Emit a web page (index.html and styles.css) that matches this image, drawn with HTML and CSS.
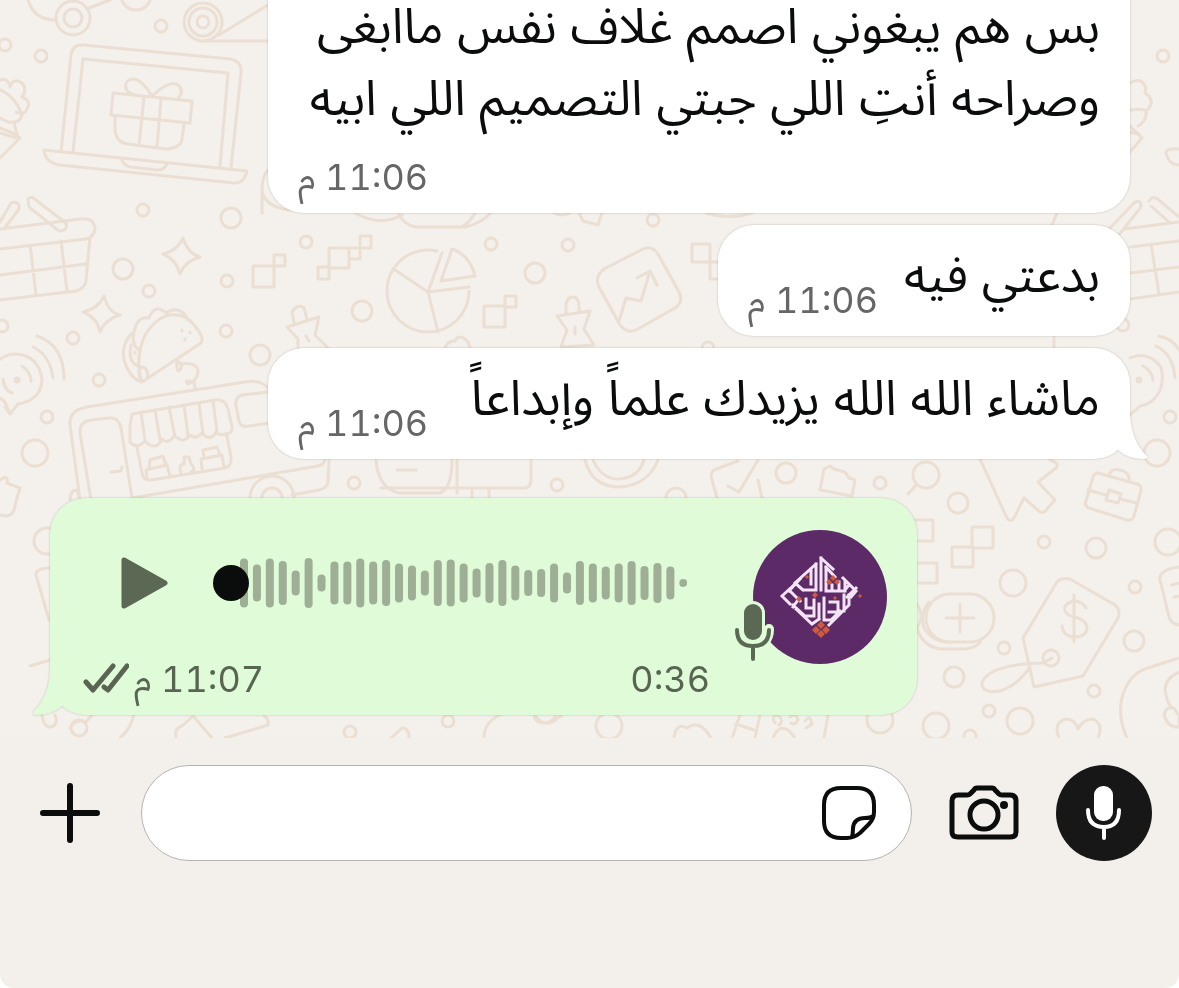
FILE: index.html
```
<!DOCTYPE html>
<html lang="ar" dir="rtl">
<head>
  <meta charset="UTF-8">
  <meta name="viewport" content="width=device-width, initial-scale=1">
  <title>محادثة</title>
  <link rel="stylesheet" href="styles.css">
</head>
<body>
  <div class="app">

    <main class="chat">
      <svg class="wallpaper" viewBox="0 0 1179 738" preserveAspectRatio="xMidYMax slice" aria-hidden="true">
        <!-- scattered dots -->
        <g>
          <circle cx="161" cy="26" r="6"/><circle cx="5" cy="45" r="6"/><circle cx="41" cy="56" r="6"/>
          <circle cx="143" cy="210" r="6"/><circle cx="231" cy="218" r="10"/><circle cx="306" cy="242" r="6"/>
          <circle cx="123" cy="269" r="10"/><circle cx="149" cy="291" r="6"/><circle cx="227" cy="281" r="6"/>
          <circle cx="226" cy="331" r="6"/><circle cx="260" cy="355" r="10"/><circle cx="362" cy="311" r="10"/>
          <circle cx="73" cy="338" r="6"/><circle cx="99" cy="380" r="6"/><circle cx="2" cy="326" r="6"/>
          <circle cx="47" cy="417" r="6"/><circle cx="35" cy="453" r="13"/><circle cx="354" cy="483" r="6"/>
          <circle cx="491" cy="244" r="6"/><circle cx="568" cy="245" r="6"/><circle cx="653" cy="220" r="6"/>
          <circle cx="535" cy="273" r="10"/><circle cx="708" cy="348" r="6"/><circle cx="557" cy="485" r="6"/>
          <circle cx="676" cy="498" r="10"/><circle cx="786" cy="473" r="10"/><circle cx="880" cy="483" r="6"/>
          <circle cx="958" cy="503" r="10"/><circle cx="1044" cy="542" r="6"/><circle cx="1096" cy="548" r="10"/>
          <circle cx="1168" cy="542" r="13"/><circle cx="1013" cy="583" r="13"/><circle cx="1135" cy="587" r="6"/>
          <circle cx="1134" cy="641" r="10"/><circle cx="1004" cy="648" r="6"/><circle cx="954" cy="677" r="10"/>
          <circle cx="989" cy="711" r="6"/><circle cx="936" cy="726" r="13"/><circle cx="1020" cy="721" r="13"/>
          <circle cx="1094" cy="691" r="6"/><circle cx="970" cy="736" r="6"/><circle cx="1123" cy="325" r="6"/>
          <circle cx="1170" cy="417" r="6"/><circle cx="1157" cy="453" r="13"/><circle cx="1163" cy="56" r="6"/>
          <circle cx="47" cy="541" r="13"/><circle cx="79" cy="728" r="8"/><circle cx="350" cy="732" r="6"/>
          <circle cx="448" cy="721" r="6"/><circle cx="609" cy="726" r="13"/><circle cx="880" cy="720" r="13"/>
        </g>
        <!-- toy wheels -->
        <path d="M28 0Q34 20 56 20M89 8L110 0M219 35L268 5M203 41H268"/>
        <circle cx="73" cy="18" r="17"/><circle cx="73" cy="18" r="9"/>
        <circle cx="136" cy="-5" r="15"/>
        <circle cx="203" cy="22" r="19"/><circle cx="203" cy="22" r="14"/><circle cx="203" cy="22" r="6"/>
        <!-- laptop with gift -->
        <path d="M61 152L71 55Q72 44 84 45L230 59Q242 61 241 73L231 168M73 152L83 59L228 73L220 166M44 150L247 171Q244 184 234 183L60 165Q45 163 44 150ZM122 160Q124 166 131 167L157 170Q164 170 167 164"/>
        <path d="M113 93L192 101L190 123L111 115ZM115 116L115 131Q117 143 128 144L166 149Q181 148 182 139L184 123M144 97L139 145M161 99L157 147M152 96Q141 78 132 79Q124 81 126 88Q127 94 137 95M152 96Q169 81 176 84Q184 88 180 96L178 99"/>
        <!-- flowers at both sides -->
        <path d="M0 80Q8 77 10 87Q14 76 23 84Q27 91 22 97Q32 101 27 109Q24 116 16 112M0 90Q15 96 22 115Q20 124 8 122L0 118M0 128L17 135L20 138L0 158M17 135L14 122M0 133L16 138"/>
        <path d="M1130 83Q1141 76 1146 88L1145 93Q1157 101 1146 111Q1147 121 1138 126M1130 110Q1144 108 1146 111M1130 126L1142 138L1130 152M1130 132L1139 134M1179 149Q1166 148 1166 153Q1169 165 1179 165"/>
        <!-- baskets -->
        <path d="M0 229L80 219Q94 217 95 229Q94 237 86 239L0 249M90 237L86 281Q85 288 76 291L0 300M0 275L86 264M30 245L36 294M61 241L67 291M0 222L11 203Q20 200 19 209L4 229M28 199Q32 195 37 201L66 223Q68 231 59 231L29 207Z"/>
        <path d="M1110 228L1134 203Q1141 198 1141 207L1118 236M1149 201Q1153 194 1160 201L1179 217M1151 206L1170 223M1124 229L1179 222M1130 247L1179 241M1130 273L1179 267M1130 299L1179 292M1151 244L1159 294"/>
        <!-- sparkles -->
        <path d="M183 238Q188 254 200 257Q185 261 180 274Q176 259 163 254Q177 251 183 238ZM104 296Q108 312 120 315Q105 319 100 332Q97 317 83 312Q98 309 104 296Z"/>
        <!-- pixel stairs -->
        <path d="M253 266h21v21h-21zM274 255h11v11h-11zM318 267h11v12h-11zM329 248h20v20h-20zM349 248h11v11h-11zM360 236h11v12h-11zM484 306h21v21h-21zM505 296h11v11h-11zM692 244h18v18h-18zM710 262h18v17h-18zM900 520h33v21h-33zM972 527h21v21h-21zM952 547h21v20h-21zM916 563h21v20h-21z"/>
        <!-- taco -->
        <path d="M142 382Q134 360 145 335Q162 308 185 317Q190 319 198 330Q204 338 201 343L142 382Q130 379 124 360Q121 342 134 332Q137 316 149 318Q155 303 166 313Q180 304 188 320M134 332Q131 345 139 350M131 345Q127 365 142 367M142 382Q136 372 142 367Q149 368 147 378"/>
        <path d="M182 330v1M190 332v1M185 339v1M135 352v1M139 358v1"/>
        <!-- audio bubble -->
        <path d="M5 407L10 414L18 404Q41 400 42 380Q39 355 15 354Q0 355 -5 366M10 414L5 402L0 398M37 336Q64 345 64 379M33 347Q50 355 53 378M3 379Q4 390 12 393M22 366Q31 372 31 381"/>
        <circle cx="17" cy="380" r="2"/>
        <!-- food truck -->
        <path d="M80 500L70 425Q69 410 87 407L245 382Q262 379 270 390M91 500L80 433Q79 422 91 420L109 418Q119 417 121 428L132 498L318 466Q327 464 324 455M329 460L328 481Q328 488 319 490L292 495M111 472L121 471L122 467M268 392L242 395Q235 397 236 405L239 421Q241 428 249 426L270 423"/>
        <path d="M132 414L215 400Q225 398 228 409L232 427Q233 433 226 434Q219 436 216 432Q212 440 205 436L202 433Q196 440 190 435Q184 443 178 438L174 436Q168 445 162 439Q157 450 148 444L145 441Q137 450 130 442L130 426ZM141 412L145 441M155 410L160 440M169 407L175 437M184 405L188 436M199 403L203 434M213 401L217 432M137 448L142 473Q143 481 151 480L225 468Q232 466 231 457L227 436"/>
        <path d="M147 479L146 470L167 465L170 476M149 469L150 460L163 456L166 465M181 473Q178 464 184 464V457H189L191 464Q197 470 191 472M202 469L201 459L222 455L224 467M204 458L203 450L217 447L220 455"/>
        <circle cx="272" cy="498" r="22"/><circle cx="272" cy="498" r="10"/>
        <path d="M195 388L194 382Q183 379 188 384Q198 381 198 370Q195 362 182 364L177 361Q176 371 179 371Q184 366 179 362"/>
        <!-- pie chart -->
        <circle cx="428" cy="291" r="41" stroke-dasharray="202 56" stroke-dashoffset="0"/>
        <path d="M442 253L428 292L395 270M428 292L469 287M428 292L438 332M452 249L441 281L475 276Q470 255 452 249Z"/>
        <!-- bulldog clips -->
        <path d="M557 316L590 311L584 329L594 345M557 316L567 330L561 347L594 345M566 314V304Q568 296 574 297Q580 298 579 312M575 327V334M287 327L319 317L315 335L328 348M287 327L298 339V348M294 323L292 312Q298 303 304 308L307 319M306 336L309 341"/>
        <!-- trend tile -->
        <path d="M604 269L643 249Q652 245 658 254L679 292Q684 302 675 308L636 330Q627 334 620 325L599 287Q594 277 604 269ZM619 321L626 298L641 301L650 271M637 278L650 271L657 285"/>
        <path d="M398 213Q403 224 415 227H465Q480 224 491 213M475 213Q470 222 463 226M355 213Q380 227 402 215M579 213L583 221L598 225L602 213M554 213Q562 217 570 213M706 213Q730 220 752 213M262 213V190Q262 176 268 170M262 190Q264 207 290 210M445 348Q448 340 455 341L458 337Q468 337 470 348M1057 213L1052 225M1054 337V348"/>
        <!-- screens, coins and ticks -->
        <path d="M376 460Q378 487 398 493H440Q452 488 452 460M397 470H416M381 488H525Q531 487 531 480V460M457 460V493M472 489V498M489 489V498M585 460Q592 487 620 487Q648 485 658 460M593 460Q602 480 620 479Q639 477 644 460M717 498L711 476Q711 470 719 468L738 461M728 486L739 492L758 460M758 480L762 498M824 469L830 466L834 469L845 472L849 478L855 480L852 496L820 490Z"/>
        <circle cx="926" cy="475" r="13"/>
        <path d="M917 484L908 494M980 459L1006 516Q1010 524 1014 518L1024 498L1040 512Q1044 514 1047 509L1055 500L1038 482L1056 468Q1060 463 1050 460"/>
        <!-- briefcase -->
        <path d="M1098 473L1137 484Q1142 485 1141 491L1134 516Q1132 521 1127 520L1089 508Q1084 506 1086 501L1093 477Q1094 473 1098 473ZM1088 490L1106 495M1120 499L1137 503M1109 490L1121 494L1118 503L1106 500ZM1109 475Q1111 468 1120 470Q1130 472 1129 481"/>
        <!-- voice bubble, right side -->
        <path d="M1130 358Q1148 350 1161 367Q1166 388 1153 400Q1147 405 1140 406L1130 415M1143 366Q1152 371 1153 380M1156 346Q1173 354 1175 378M1159 336Q1173 339 1179 350"/>
        <circle cx="1139" cy="380" r="2"/>
        <!-- plus pill and price tag -->
        <rect x="926" y="594" width="68" height="48" rx="24"/>
        <path d="M946 618H974M960 604V632M929 602Q920 612 924 628Q933 642 948 642M917 604Q925 616 917 628Q922 646 940 649H965Q976 648 980 642M1057 582Q1061 577 1070 579L1115 605Q1121 610 1118 618L1083 676L1034 687L1023 638ZM1086 608Q1081 600 1073 601Q1063 604 1065 611Q1067 616 1075 617Q1086 620 1087 627Q1087 637 1074 637Q1063 636 1062 626M1074 595V642M1052 658L1043 663Q991 664 982 682Q981 694 1000 691Q1018 685 1030 667"/>
        <circle cx="1051" cy="658" r="8"/>
        <!-- headset -->
        <path d="M1127 738Q1115 711 1125 689Q1133 671 1151 667L1179 658M1179 672Q1162 680 1166 695Q1168 704 1172 708M1164 715Q1166 706 1174 708L1179 716V727Q1168 728 1164 715M1179 567Q1158 570 1160 580L1169 617Q1171 624 1179 625M1172 585L1179 583M1174 597L1179 596"/>
        <path d="M1059 738Q1053 722 1066 719Q1075 719 1078 729Q1083 719 1093 719Q1104 724 1098 738"/>
        <!-- shapes that show below the voice note -->
        <path d="M0 480Q9 474 7 483L20 488L15 505Q14 519 0 515M50 568Q36 568 36 575L49 620M50 660L30 666M70 500Q70 490 77 490L80 500M42 715Q44 728 51 727Q59 725 55 715M70 728Q76 718 86 722L92 715M134 715Q130 730 120 738M176 738Q174 728 182 726L193 716L212 738M225 738L268 725Q269 719 264 716M391 738L402 728Q409 728 409 738M484 738Q484 722 500 715M535 715Q545 730 558 718L562 715M534 715Q534 723 547 723Q554 720 556 715M674 738Q676 722 687 728Q699 718 711 738M740 715L732 738M736 724L754 730M760 715L755 738M828 715L824 738M773 738Q779 723 789 731Q796 738 794 738M775 723Q770 714 779 716Q784 721 779 725M790 717Q796 712 798 720Q795 726 791 723M805 721Q810 714 812 724L806 728"/>
      </svg>

      <article class="bubble bubble-wide bubble-long">
        <p class="text">بس هم يبغوني اصمم غلاف نفس ماابغى<br>وصراحه أنتِ اللي جبتي التصميم اللي ابيه</p>
        <time class="time" datetime="23:06">11:06 م</time>
      </article>

      <article class="bubble bubble-row">
        <p class="text">بدعتي فيه</p>
        <time class="time" datetime="23:06">11:06 م</time>
      </article>

      <article class="bubble bubble-row bubble-wide">
        <p class="text">ماشاء الله الله يزيدك علماً وإبداعاً</p>
        <time class="time" datetime="23:06">11:06 م</time>
        <svg class="tail" viewBox="0 0 40 60" aria-hidden="true"><path d="M6 0H21V15Q22 42 38 57Q39 60 35 60Q19 60 9 51Z"/></svg>
      </article>

      <article class="bubble voice">
        <div class="voice-main">
          <div class="player">
            <button class="play" type="button" aria-label="تشغيل">
              <svg viewBox="0 0 48 52"><path d="M3 3V49L44 26Z"/></svg>
            </button>
            <div class="wave">
              <svg class="bars" viewBox="0 0 474 52" aria-hidden="true"></svg>
              <input class="seek" type="range" min="0" max="36" value="0" aria-label="موضع التشغيل">
            </div>
          </div>
          <div class="voice-meta">
            <span class="sent">
              <svg class="ticks" viewBox="0 0 46 32" aria-hidden="true"><path d="M3 19L10 27L30 3M21 24L25 27L44 3"/></svg>
              <time class="time" dir="rtl" datetime="23:07">11:07 م</time>
            </span>
            <span class="time">0:36</span>
          </div>
        </div>
        <div class="avatar">
          <svg class="logo" viewBox="0 0 135 135" aria-hidden="true">
            <circle class="logo-bg" cx="67" cy="67" r="67"/>
            <g class="logo-lines">
              <path d="M68 28V60M68 28L80 39M63 34V60H51M58 39V54M63 34L42 53L50 60M36 61L47 49M29 66L42 54M29 66L37 74M37 61L47 71"/>
              <path d="M73 37V61H92V52M79 55V61M86 52V61M73 37L82 47M90 48L103 61L98 67M96 55L91 61M94 67L103 58"/>
              <path d="M40 75L52 86H61V70M45 70L40 77M53 69V78H61M66 74V89M66 89L59 94L43 79M71 68V90H78L87 81M77 72H85V82H76M91 65V81M96 65V75L76 95"/>
            </g>
            <g class="logo-dots">
              <path d="M80 45l3 3l-3 3l-3-3zM76 49l3 3l-3 3l-3-3zM84 49l3 3l-3 3l-3-3zM46 66l3 3l-3 3l-3-3zM62 62l3 3l-3 3l-3-3zM107 64l2 2l-2 2l-2-2zM54 45l2 2l-2 2l-2-2zM82 66l2 2l-2 2l-2-2z"/>
              <path d="M68 91l4 4l-4 4l-4-4zM63 96l4 4l-4 4l-4-4zM73 96l4 4l-4 4l-4-4zM68 100l4 4l-4 4l-4-4z"/>
            </g>
          </svg>
          <svg class="avatar-mic" viewBox="0 0 44 64" aria-hidden="true">
            <path class="mic-halo" d="M22 12V32M6 30Q6 46 22 46Q38 46 38 30M22 46V58"/>
            <rect class="mic-body" x="13" y="5" width="18" height="36" rx="9"/>
            <path class="mic-stand" d="M6 31Q6 47 22 47Q38 47 38 31M22 47V60"/>
          </svg>
        </div>
        <svg class="tail" viewBox="0 0 40 60" aria-hidden="true"><path d="M6 0H21V15Q22 42 38 57Q39 60 35 60Q19 60 9 51Z"/></svg>
      </article>
    </main>

    <form class="composer" dir="ltr">
      <button class="plus" type="button" aria-label="إرفاق">
        <svg viewBox="0 0 64 60"><path d="M30 3V57M3 30H57"/></svg>
      </button>
      <div class="field">
        <input class="field-input" type="text" dir="rtl" aria-label="رسالة">
        <button class="sticker" type="button" aria-label="ملصقات">
          <svg viewBox="0 0 56 56"><path d="M20 3H36Q53 3 53 20V27Q53 34 48 39L39 48Q33 53 26 53H20Q3 53 3 36V20Q3 3 20 3ZM31 52Q32 48 32 43Q33 33 44 33Q50 33 52 31"/></svg>
        </button>
      </div>
      <button class="camera" type="button" aria-label="الكاميرا">
        <svg viewBox="0 0 70 54"><path d="M9 9H18Q20 9 21 8L25 4Q26 2 28 2H43Q45 2 46 4L50 8Q51 9 53 9H61Q67 9 67 15V46Q67 51 61 51H9Q3 51 3 46V15Q3 9 9 9Z"/><circle cx="35" cy="29" r="14"/><circle class="flash" cx="55" cy="19" r="4"/></svg>
      </button>
      <button class="record" type="button" aria-label="تسجيل صوتي">
        <svg viewBox="0 0 36 54"><rect x="8" y="0" width="19" height="35" rx="9"/><path d="M2 24Q2 41 18 41Q33 41 33 24M18 41V52"/></svg>
      </button>
    </form>

  </div>

  <script>
    const levels = [49, 37, 49, 44, 25, 50, 17, 43, 43, 49, 43, 46, 39, 35, 25, 46, 47, 39,
      29, 40, 46, 35, 26, 28, 39, 21, 44, 39, 33, 39, 44, 34, 40, 33, 8];
    const bars = document.querySelector('.bars');

    levels.forEach((h, i) => {
      const bar = document.createElementNS('http://www.w3.org/2000/svg', 'rect');
      bar.setAttribute('x', 27 + i * 12.92);
      bar.setAttribute('y', 26 - h / 2);
      bar.setAttribute('width', 8);
      bar.setAttribute('height', h);
      bar.setAttribute('rx', 4);
      bars.appendChild(bar);
    });
  </script>
</body>
</html>
```

FILE: styles.css
```
* {
  box-sizing: border-box;
}
body {
  margin: 0;
  background: #fff;
  color: #0b0c0c;
  font-family: Inter, "Noto Sans Arabic", "DejaVu Sans", sans-serif;
}
button {
  padding: 0;
  border: 0;
  background: none;
  color: inherit;
  cursor: pointer;
}
svg {
  display: block;
  fill: none;
  stroke-linecap: round;
  stroke-linejoin: round;
}
.app {
  display: flex;
  flex-direction: column;
  height: 100vh;
  overflow: hidden;
  background: #f3efea;
  border-radius: 0 0 14px 14px;
}

/* messages */
.chat {
  position: relative;
  flex: 1;
  min-height: 0;
  display: flex;
  flex-direction: column;
  justify-content: flex-end;
  align-items: flex-start;
  gap: 12px;
  padding: 0 49px 23px 50px;
  overflow: hidden;
  background: #f4f0eb;
}
.wallpaper {
  position: absolute;
  inset: 0;
  width: 100%;
  height: 100%;
  stroke: #ebdfd3;
  stroke-width: 3;
}
.bubble {
  position: relative;
  flex: none;
  max-width: 100%;
  padding: 14px 30px;
  background: #fff;
  border-radius: 36px;
  filter: drop-shadow(0 0 1px rgba(0, 0, 0, 0.2));
}
.bubble-wide {
  width: 862px;
}
.bubble-long {
  padding-top: 32px;
}
.bubble-row {
  display: flex;
  justify-content: space-between;
  align-items: flex-end;
  gap: 26px;
}
.text {
  margin: 0 0 21px;
  font-size: 49px;
  line-height: 72px;
}
.bubble-row .text {
  margin-bottom: 11px;
}
.time {
  display: block;
  font-size: 36px;
  font-variant-numeric: tabular-nums;
  line-height: 44px;
  color: #666;
  white-space: nowrap;
}
.bubble > .time {
  text-align: left;
}
.tail {
  position: absolute;
  right: -19px;
  bottom: 0;
  width: 40px;
  height: 60px;
  fill: #fff;
}

/* voice note */
.voice {
  direction: ltr;
  align-self: flex-end;
  display: flex;
  gap: 43px;
  width: 867px;
  margin-top: 27px;
  padding: 32px 29px 14px 33px;
  background: #dffbd8;
}
.voice .tail {
  right: auto;
  left: -19px;
  fill: #dffbd8;
  transform: scaleX(-1);
}
.voice-main {
  flex: 1;
  display: flex;
  flex-direction: column;
  gap: 21px;
}
.player {
  display: flex;
  justify-content: space-between;
  align-items: center;
  height: 106px;
  padding: 0 23px 0 38px;
}
.play svg {
  width: 48px;
  height: 52px;
  fill: #5b6954;
  stroke: #5b6954;
  stroke-width: 5;
}
.wave {
  position: relative;
  width: 474px;
}
.bars {
  width: 100%;
  fill: #9eaf96;
}
.seek {
  position: absolute;
  inset: 0;
  width: 100%;
  height: 100%;
  margin: 0;
  appearance: none;
  background: none;
}
.seek::-webkit-slider-thumb {
  appearance: none;
  width: 36px;
  height: 36px;
  border-radius: 50%;
  background: #0b0c0c;
}
.voice-meta {
  display: flex;
  justify-content: space-between;
}
.voice .time {
  color: #586551;
}
.sent {
  display: flex;
  align-items: center;
  gap: 5px;
}
.ticks {
  width: 46px;
  height: 32px;
  stroke: #586551;
  stroke-width: 5;
}
.avatar {
  position: relative;
  width: 135px;
  height: 135px;
}
.logo-bg {
  fill: #5d2a68;
}
.logo-lines {
  stroke: #f3e4f5;
  stroke-width: 3;
  stroke-linecap: square;
  stroke-linejoin: miter;
}
.logo-dots {
  fill: #cf5a3c;
}
.avatar-mic {
  position: absolute;
  left: -22px;
  bottom: 2px;
  width: 44px;
  height: 64px;
}
.mic-halo {
  stroke: #dffbd8;
  stroke-width: 10;
}
.mic-halo,
.mic-stand {
  fill: none;
}
.mic-body {
  fill: #5b6954;
  stroke: #dffbd8;
  stroke-width: 6;
  paint-order: stroke;
}
.mic-stand {
  stroke: #5b6954;
  stroke-width: 4;
}

/* composer */
.composer {
  display: flex;
  align-items: center;
  gap: 37px;
  padding: 27px 27px 127px 40px;
}
.plus svg {
  width: 64px;
  height: 60px;
  stroke: #0b0c0c;
  stroke-width: 6;
}
.field {
  flex: 1;
  display: flex;
  align-items: center;
  height: 96px;
  padding: 0 34px 0 40px;
  background: #fff;
  border: 1px solid #b5b3b1;
  border-radius: 48px;
}
.field-input {
  flex: 1;
  min-width: 0;
  border: 0;
  outline: 0;
  background: none;
  font: inherit;
  font-size: 36px;
}
.sticker svg {
  width: 56px;
  height: 56px;
  stroke: #0b0c0c;
  stroke-width: 4;
}
.camera svg {
  width: 70px;
  height: 54px;
  overflow: visible;
  stroke: #0b0c0c;
  stroke-width: 5;
}
.camera .flash {
  fill: #0b0c0c;
  stroke: none;
}
.record {
  display: flex;
  justify-content: center;
  align-items: center;
  width: 96px;
  height: 96px;
  border-radius: 50%;
  background: #171717;
}
.record svg {
  width: 36px;
  height: 54px;
  stroke: #fff;
  stroke-width: 4;
}
.record rect {
  fill: #fff;
  stroke: none;
}
```
